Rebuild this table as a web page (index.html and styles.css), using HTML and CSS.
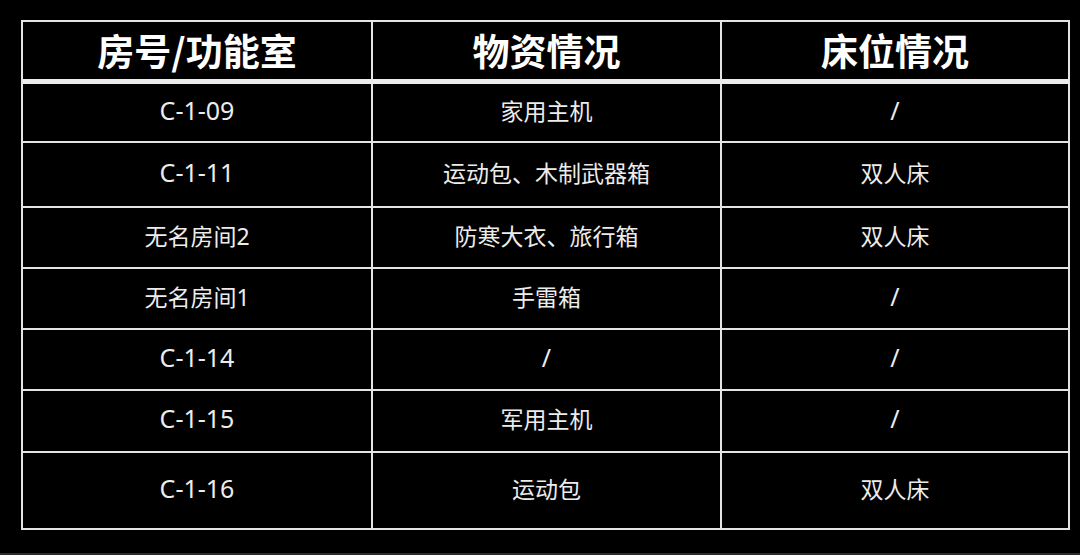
FILE: index.html
```html
<!DOCTYPE html>
<html lang="zh">
<head>
<meta charset="utf-8">
<title>房间物资表</title>
<link rel="stylesheet" href="styles.css">
</head>
<body>
<table class="sheet">
  <colgroup>
    <col class="c1"><col class="c2"><col class="c3">
  </colgroup>
  <thead>
    <tr class="head"><th>房号/功能室</th><th>物资情况</th><th>床位情况</th></tr>
  </thead>
  <tbody>
    <tr class="r1"><td class="code">C-1-09</td><td>家用主机</td><td class="code">/</td></tr>
    <tr class="r2"><td class="code">C-1-11</td><td>运动包、木制武器箱</td><td>双人床</td></tr>
    <tr class="r3"><td>无名房间2</td><td>防寒大衣、旅行箱</td><td>双人床</td></tr>
    <tr class="r4"><td>无名房间1</td><td>手雷箱</td><td class="code">/</td></tr>
    <tr class="r5"><td class="code">C-1-14</td><td class="code">/</td><td class="code">/</td></tr>
    <tr class="r6"><td class="code">C-1-15</td><td>军用主机</td><td class="code">/</td></tr>
    <tr class="r7"><td class="code">C-1-16</td><td>运动包</td><td>双人床</td></tr>
  </tbody>
</table>
</body>
</html>
```

FILE: styles.css
```css
html, body {
  margin: 0;
  background: #000;
}
body {
  padding: 20px 0 0 21px;
  height: 555px;
  box-sizing: border-box;
  border-bottom: 2px solid #2c2c2c;
  font-family: "Noto Sans", "Noto Sans CJK SC", sans-serif;
  overflow: hidden;
}
.sheet {
  border-collapse: separate;
  border-spacing: 0;
  table-layout: fixed;
  width: 1049px;
  border-top: 2px solid #e4e4e4;
  border-left: 2px solid #e4e4e4;
}
.c1 { width: 350px; }
.c2 { width: 349px; }
.c3 { width: 348px; }
.sheet th, .sheet td {
  padding: 0;
  text-align: center;
  vertical-align: middle;
  border-right: 2px solid #e4e4e4;
  border-bottom: 2px solid #e4e4e4;
}
.sheet th {
  color: #fff;
  font-family: "Noto Sans CJK SC", sans-serif;
  font-weight: 700;
  font-size: 37px;
  line-height: 1;
  border-bottom: 5px solid #ececec;
}
.sheet td {
  color: #ececec;
  font-size: 23px;
  line-height: 1;
  padding-bottom: 3px;
}
.sheet td.code {
  font-size: 25px;
  padding-bottom: 5px;
}
.head { height: 62px; }
.r1 { height: 59px; }
.r2 { height: 65px; }
.r3 { height: 61px; }
.r4 { height: 61px; }
.r5 { height: 61px; }
.r6 { height: 62px; }
.r7 { height: 77px; }
```
